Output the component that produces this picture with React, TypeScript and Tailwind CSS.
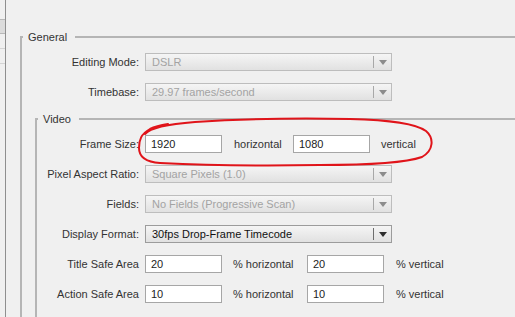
import React from "react";

function Arrow({ dark }: { dark?: boolean }) {
  return (
    <svg width="8" height="5" viewBox="0 0 8 5">
      <path d="M0 0h8L4 5z" fill={dark ? "#2e2e2e" : "#8c8c8c"} />
    </svg>
  );
}

function Select({ value, enabled }: { value: string; enabled?: boolean }) {
  return (
    <div
      className={`flex h-[18px] w-[247px] items-center border bg-gradient-to-b from-[#f5f5f5] to-[#e1e1e1] ${
        enabled ? "border-[#9c9c9c] text-[#111]" : "border-[#bdbdbd] text-[#a3a3a3]"
      }`}
    >
      <span className="flex-1 truncate pl-[6px] leading-none">{value}</span>
      <div className={`h-[12px] w-px ${enabled ? "bg-[#6e6e6e]" : "bg-[#a8a8a8]"}`} />
      <div className="flex w-[17px] justify-center">
        <Arrow dark={enabled} />
      </div>
    </div>
  );
}

function Input({ value }: { value: string }) {
  return (
    <div className="flex h-[18px] w-[77px] items-center border border-[#a6a6a6] bg-white pl-[5px] leading-none text-[#222]">
      {value}
    </div>
  );
}

function Row({ label, width, children }: { label: string; width: string; children: React.ReactNode }) {
  return (
    <div className="flex h-[18px] items-center">
      <span className={`${width} shrink-0 pr-[6px] text-right text-[#333]`}>{label}</span>
      {children}
    </div>
  );
}

function GroupHeader({ title }: { title: string }) {
  return (
    <div className="flex h-[14px] items-stretch">
      <div className="mt-[6px] w-[3px] border-l-2 border-t-2 border-[#b5b5b5]" />
      <span className="pl-[5px] pr-[8px] leading-[14px] text-[#333]">{title}</span>
      <div className="mt-[6px] flex-1 border-t-2 border-[#b5b5b5]" />
    </div>
  );
}

export default function App() {
  const gl = "w-[123px]";
  const vl = "w-[108px]";
  return (
    <div
      className="relative flex h-[317px] w-[515px] overflow-hidden bg-[#f0f0f0] text-[11px]"
      style={{ fontFamily: '"Liberation Sans", Arial, sans-serif' }}
    >
      {/* list panel edge */}
      <div className="w-[6px] shrink-0 border-r border-[#8f8f8f] pt-[19px]">
        <div className="h-[15px] border-y border-[#b8b8b8] bg-[#dcdcdc]" />
        <div className="h-[15px] border-b border-[#d4d4d4]" />
        <div className="h-[15px] border-b border-[#d4d4d4]" />
      </div>

      <div className="flex-1 pt-[30px]">
        <div className="ml-[14px]">
          <GroupHeader title="General" />
          <div className="h-[300px] border-l-2 border-[#b5b5b5] pt-[9px]">
            <div className="flex flex-col gap-[12px]">
              <Row label="Editing Mode:" width={gl}>
                <Select value="DSLR" />
              </Row>
              <Row label="Timebase:" width={gl}>
                <Select value="29.97 frames/second" />
              </Row>
            </div>

            <div className="ml-[13px] mt-[11px]">
              <GroupHeader title="Video" />
              <div className="h-[220px] border-l-2 border-[#b5b5b5] pt-[9px]">
                <div className="flex flex-col gap-[12px]">
                  <Row label="Frame Size:" width={vl}>
                    <Input value="1920" />
                    <span className="ml-[12px] w-[59px] text-[#333]">horizontal</span>
                    <Input value="1080" />
                    <span className="ml-[11px] text-[#333]">vertical</span>
                  </Row>
                  <Row label="Pixel Aspect Ratio:" width={vl}>
                    <Select value="Square Pixels (1.0)" />
                  </Row>
                  <Row label="Fields:" width={vl}>
                    <Select value="No Fields (Progressive Scan)" />
                  </Row>
                  <Row label="Display Format:" width={vl}>
                    <Select value="30fps Drop-Frame Timecode" enabled />
                  </Row>
                  <Row label="Title Safe Area" width={vl}>
                    <Input value="20" />
                    <span className="ml-[11px] w-[74px] text-[#333]">% horizontal</span>
                    <Input value="20" />
                    <span className="ml-[12px] text-[#333]">% vertical</span>
                  </Row>
                  <Row label="Action Safe Area" width={vl}>
                    <Input value="10" />
                    <span className="ml-[11px] w-[74px] text-[#333]">% horizontal</span>
                    <Input value="10" />
                    <span className="ml-[12px] text-[#333]">% vertical</span>
                  </Row>
                </div>
              </div>
            </div>
          </div>
        </div>
      </div>

      {/* hand-drawn red marker ellipse */}
      <svg className="pointer-events-none absolute left-0 top-0" width="515" height="317" viewBox="0 0 515 317">
        <path
          d="M145 134 C150 128 170 124 195 122 C240 119 300 118 350 119 C390 120 415 123 426 131 C434 138 434 150 422 157 C405 163 370 165 320 165 C260 166 200 165 160 163 C145 162 139 157 139 148 C139 140 141 134 150 129 C156 126 162 125 168 124"
          fill="none"
          stroke="#e0141a"
          strokeWidth="2"
          strokeLinecap="round"
        />
      </svg>
    </div>
  );
}
